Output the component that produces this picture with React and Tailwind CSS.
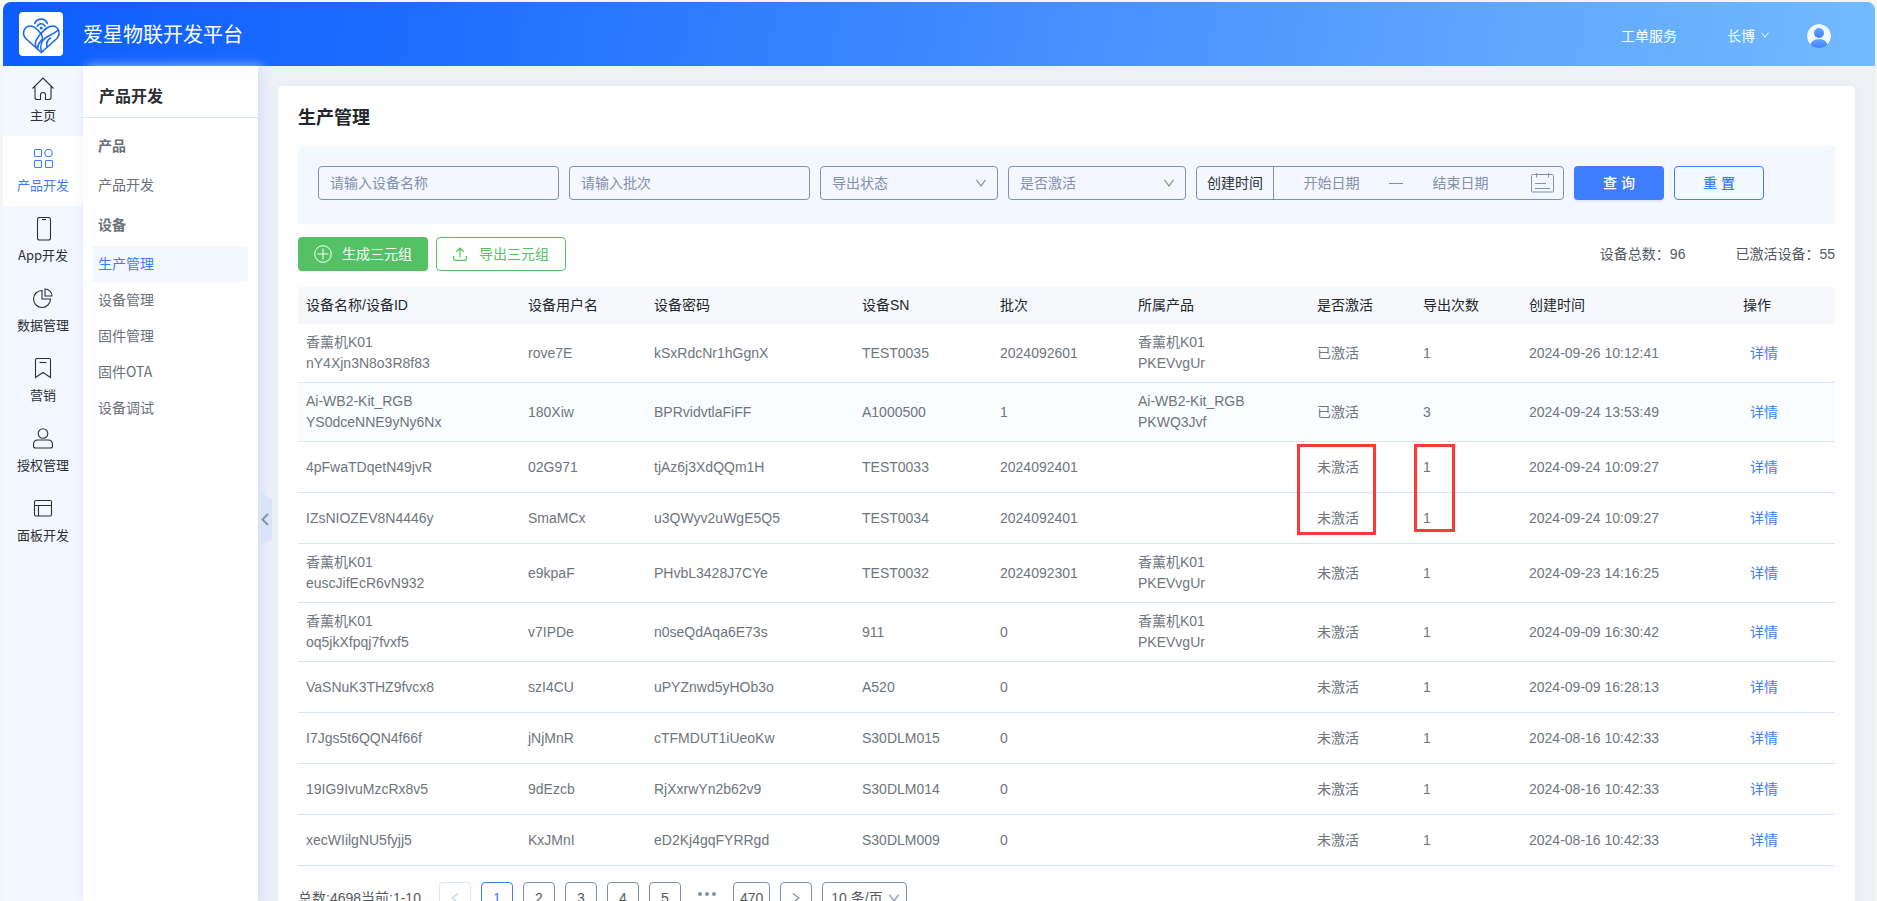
import { clsx } from "clsx";

const SIDE_NAV = [
    { label: '主页', icon: 'home' },
    { label: '产品开发', icon: 'grid', active: true },
    { label: 'App开发', icon: 'phone' },
    { label: '数据管理', icon: 'pie' },
    { label: '营销', icon: 'bookmark' },
    { label: '授权管理', icon: 'user' },
    { label: '面板开发', icon: 'panel' },
];

const MENU = [
    { title: '产品', items: ['产品开发'] },
    { title: '设备', items: ['生产管理', '设备管理', '固件管理', '固件OTA', '设备调试'] },
];

const COLUMNS = [
    { title: '设备名称/设备ID', width: 'w-[222px]' },
    { title: '设备用户名', width: 'w-[126px]' },
    { title: '设备密码', width: 'w-[208px]' },
    { title: '设备SN', width: 'w-[138px]' },
    { title: '批次', width: 'w-[138px]' },
    { title: '所属产品', width: 'w-[179px]' },
    { title: '是否激活', width: 'w-[106px]' },
    { title: '导出次数', width: 'w-[106px]' },
    { title: '创建时间', width: 'w-[214px]' },
    { title: '操作', width: 'w-[100px]' },
];

const ROWS = [
    { name: '香薰机K01', id: 'nY4Xjn3N8o3R8f83', user: 'rove7E', password: 'kSxRdcNr1hGgnX', sn: 'TEST0035', batch: '2024092601', product: '香薰机K01', productKey: 'PKEVvgUr', active: true, exports: 1, created: '2024-09-26 10:12:41' },
    { name: 'Ai-WB2-Kit_RGB', id: 'YS0dceNNE9yNy6Nx', user: '180Xiw', password: 'BPRvidvtlaFiFF', sn: 'A1000500', batch: '1', product: 'Ai-WB2-Kit_RGB', productKey: 'PKWQ3Jvf', active: true, exports: 3, created: '2024-09-24 13:53:49', hover: true },
    { id: '4pFwaTDqetN49jvR', user: '02G971', password: 'tjAz6j3XdQQm1H', sn: 'TEST0033', batch: '2024092401', exports: 1, created: '2024-09-24 10:09:27', marked: true },
    { id: 'IZsNIOZEV8N4446y', user: 'SmaMCx', password: 'u3QWyv2uWgE5Q5', sn: 'TEST0034', batch: '2024092401', exports: 1, created: '2024-09-24 10:09:27' },
    { name: '香薰机K01', id: 'euscJifEcR6vN932', user: 'e9kpaF', password: 'PHvbL3428J7CYe', sn: 'TEST0032', batch: '2024092301', product: '香薰机K01', productKey: 'PKEVvgUr', exports: 1, created: '2024-09-23 14:16:25' },
    { name: '香薰机K01', id: 'oq5jkXfpqj7fvxf5', user: 'v7IPDe', password: 'n0seQdAqa6E73s', sn: '911', batch: '0', product: '香薰机K01', productKey: 'PKEVvgUr', exports: 1, created: '2024-09-09 16:30:42' },
    { id: 'VaSNuK3THZ9fvcx8', user: 'szI4CU', password: 'uPYZnwd5yHOb3o', sn: 'A520', batch: '0', exports: 1, created: '2024-09-09 16:28:13' },
    { id: 'I7Jgs5t6QQN4f66f', user: 'jNjMnR', password: 'cTFMDUT1iUeoKw', sn: 'S30DLM015', batch: '0', exports: 1, created: '2024-08-16 10:42:33' },
    { id: '19IG9IvuMzcRx8v5', user: '9dEzcb', password: 'RjXxrwYn2b62v9', sn: 'S30DLM014', batch: '0', exports: 1, created: '2024-08-16 10:42:33' },
    { id: 'xecWIilgNU5fyjj5', user: 'KxJMnI', password: 'eD2Kj4gqFYRRgd', sn: 'S30DLM009', batch: '0', exports: 1, created: '2024-08-16 10:42:33' },
];

const ICONS = {
    home: <path d="M.5 11.500 11 1l10.500 10.500M3 9.500V20.500Q3 22.500 5 22.500H8.500V18Q8.500 15.500 11 15.500T13.500 18V22.500H17Q19 22.500 19 20.500V9.500" />,
    grid: <>
        <rect x="2.500" y="2.500" width="7" height="7" rx="1" />
        <circle cx="16.500" cy="6" r="3.700" />
        <rect x="2.500" y="13.500" width="7" height="7" rx="1" />
        <rect x="13.500" y="13.500" width="7" height="7" rx="1" />
    </>,
    phone: <>
        <rect x="5.500" y=".500" width="13" height="22.500" rx="2" />
        <path d="M10 2.500h4" />
    </>,
    pie: <>
        <path d="M10 3.500a8.500 8.500 0 1 0 8.500 8.500H10z" />
        <path d="M13 2v7h7a7 7 0 0 0-7-7z" />
    </>,
    bookmark: <>
        <path d="M3.500 20.500V3Q3.500 1.500 5 1.500H17.500Q18.500 1.500 18.500 3V20.500L11 15.500z" />
        <path d="M7.500 5.500h7" />
    </>,
    user: <>
        <circle cx="11" cy="6.500" r="4.800" />
        <path d="M3.500 21Q1.500 21 1.500 19V17.500Q1.500 13 6 13H16Q20.500 13 20.500 17.500V19Q20.500 21 18.500 21z" />
    </>,
    panel: <>
        <rect x="2.500" y="3.500" width="17" height="15.500" rx="1.500" />
        <path d="M2.500 8.500h17M6.500 8.500v10.500" />
    </>,
};

const NavIcon = ({ name }) => (
    <svg className="w-[22px] h-6" viewBox="0 0 22 24" fill="none" stroke="currentColor" strokeWidth="1.100">
        {ICONS[name]}
    </svg>
);

const Chevron = ({ className }) => (
    <svg className={className} viewBox="0 0 10 8" fill="none" stroke="currentColor" strokeWidth="1.200">
        <path d="M.5.8 5 7 9.500.8" />
    </svg>
);

const Logo = () => (
    <svg className="size-11 rounded bg-white" viewBox="0 0 44 44" fill="none" stroke="#1b68f5" strokeWidth="1.600" strokeLinecap="round">
        <path d="M22.300 40.500 6.800 26.500C2 21 5.500 14 11.500 14c4.500 0 7.500 4 10.200 7.500 3 3.500 2 5.500-.3 8-2 2.200-3 4-2.800 7.500" />
        <path d="M22.300 40.500 37.800 26.500C42.500 21 39 14 33.500 14c-5 0-8.500 4-12 8-4.300 5-6.500 8.500-4.500 13.500" />
        <path d="M22.700 40C20.500 34 22.500 28.500 27 25.500c4-2.500 8.500-3.500 12-7.500" />
        <path d="M28 35c-1-4 .5-7 3.500-9" />
        <path d="M15.800 11.500a6.700 6.700 0 0 1 12.600 0M18.300 14.200a4.200 4.200 0 0 1 7.700 0" />
        <circle cx="22.200" cy="16" r=".700" fill="#1b68f5" />
    </svg>
);

const Header = () => (
    <header className="flex items-center h-16 shrink-0 pl-4 pr-11 rounded-t-lg text-white bg-[linear-gradient(100deg,#0d5dff_0%,#1c6bff_20%,#60a6ff_80%,#72baff_100%)]">
        <Logo />
        <h1 className="ml-5 text-xl leading-none">爱星物联开发平台</h1>
        <a href="#" className="ml-auto mt-0.5 text-sm">工单服务</a>
        <button type="button" className="flex items-center ml-[50px] mt-0.5 text-sm gap-1.5">
            长博
            <Chevron className="w-2 h-1.5" />
        </button>
        <svg className="ml-[38px] mt-1 size-6" viewBox="0 0 24 24">
            <defs>
                <linearGradient id="avatar" x1="0" y1="0" x2="0" y2="1">
                    <stop offset="0" stopColor="#64a8ff" />
                    <stop offset="1" stopColor="#3c7dff" />
                </linearGradient>
                <clipPath id="round"><circle cx="12" cy="12" r="12" /></clipPath>
            </defs>
            <g clipPath="url(#round)">
                <circle cx="12" cy="12" r="12" fill="#f3f8ff" />
                <circle cx="12" cy="9" r="5" fill="url(#avatar)" />
                <path d="M3 24c0-6 3.500-9 9-9s9 3 9 9z" fill="url(#avatar)" />
            </g>
        </svg>
    </header>
);

const SideNav = () => (
    <nav className="w-20 shrink-0 bg-[#f3f7ff]">
        {SIDE_NAV.map((item) => (
            <a
                key={item.label}
                href="#"
                className={clsx(
                    "flex flex-col items-center h-[70px] pt-[11px] gap-1 text-[13px] leading-5",
                    item.active ? "bg-white text-[#3d7eff]" : "text-[#2b2f36]"
                )}>
                <NavIcon name={item.icon} />
                {item.label}
            </a>
        ))}
    </nav>
);

const SubMenu = () => (
    <aside className="relative z-10 w-[175px] shrink-0 bg-white shadow-[4px_2px_12px_#d0dff7]">
        <h2 className="h-[52px] pl-4 pt-2 text-base leading-[42px] font-bold text-[#2b2f36] border-b border-[#d9e5f6]">产品开发</h2>
        <div className="pt-2.5 px-2.5 text-sm text-[#6b7078]">
            {MENU.map((group) => (
                <div key={group.title} className="mb-1">
                    <h3 className="h-9 mb-[3px] px-[5px] leading-[34px] font-bold">{group.title}</h3>
                    {group.items.map((item) => (
                        <a
                            key={item}
                            href="#"
                            className={clsx("block h-9 px-[5px] leading-[34px]", item === '生产管理' && "bg-[#f3f7ff] text-[#3d7eff]")}>
                            {item}
                        </a>
                    ))}
                </div>
            ))}
        </div>
        <button type="button" aria-label="收起" className="absolute left-full top-[425px] w-3.5 h-14 text-[#8594ab]">
            <svg viewBox="0 0 14 56" className="w-full h-full">
                <path d="M0 0 14 8V49L0 56z" fill="#d9e5f6" />
                <path d="M10 23 4.500 28.500 10 34" fill="none" stroke="currentColor" strokeWidth="2" />
            </svg>
        </button>
    </aside>
);

const field = "h-[34px] border border-[#8190ab] rounded text-sm text-[#8190ab] placeholder:text-[#8190ab] bg-transparent outline-none";

const SelectField = ({ label }) => (
    <div className="relative w-[178px]">
        <select aria-label={label} className={clsx(field, "w-full px-[11px] appearance-none")}>
            <option>{label}</option>
        </select>
        <Chevron className="absolute right-3 top-[13px] w-2.5 h-2 text-[#8190ab] pointer-events-none" />
    </div>
);

const Filters = () => (
    <form className="flex flex-wrap items-start gap-2.5 min-h-[78px] p-5 bg-[#f3f7ff]">
        <input aria-label="设备名称" placeholder="请输入设备名称" className={clsx(field, "w-[241px] px-[11px]")} />
        <input aria-label="批次" placeholder="请输入批次" className={clsx(field, "w-[241px] px-[11px]")} />
        <SelectField label="导出状态" />
        <SelectField label="是否激活" />
        <div className={clsx(field, "flex items-center w-[368px]")}>
            <label htmlFor="start" className="h-full px-2.5 leading-8 text-[#2b2f36] border-r border-[#8190ab]">创建时间</label>
            <input id="start" placeholder="开始日期" className="w-[115px] text-center placeholder:text-[#8190ab] outline-none" />
            <span className="w-3.5 h-px bg-[#8190ab]" />
            <input aria-label="结束日期" placeholder="结束日期" className="w-[115px] text-center placeholder:text-[#8190ab] outline-none" />
            <svg className="ml-auto mr-2 w-6 h-5" viewBox="0 0 24 20" fill="none" stroke="currentColor">
                <rect x=".500" y="1.500" width="22" height="17.500" rx="1" />
                <path d="M5.500 0v4.500M17.500 0v4.500M4 10.500h11M4 15.500h15" />
            </svg>
        </div>
        <button type="button" className="w-[90px] h-[34px] rounded text-sm font-medium text-white bg-[#3d7eff] shadow-[0_2px_0_rgba(0,0,0,0.06)]">查 询</button>
        <button type="button" className="w-[90px] h-[34px] rounded text-sm font-medium text-[#3d7eff] border border-[#3d7eff]">重 置</button>
    </form>
);

const Toolbar = () => (
    <div className="flex items-center mt-[13px] text-sm">
        <button type="button" className="flex items-center justify-center gap-2.5 w-[130px] h-[34px] rounded text-white bg-[#54c264]">
            <svg className="size-[18px]" viewBox="0 0 18 18" fill="none" stroke="currentColor">
                <circle cx="9" cy="9" r="8.300" />
                <path d="M9 3.500v11M3.500 9h11" />
            </svg>
            生成三元组
        </button>
        <button type="button" className="flex items-center justify-center gap-3 ml-2 w-[130px] h-[34px] rounded text-[#54c264] border border-[#54c264]">
            <svg className="size-3.5" viewBox="0 0 14 14" fill="none" stroke="currentColor" strokeWidth="1.200">
                <path d="M.7 9v3.300q0 1 1 1h10.600q1 0 1-1V9M7 10.500V1.300M3.300 4.800 7 1.200l3.700 3.600" />
            </svg>
            导出三元组
        </button>
        <span className="ml-auto text-[#555a61]">设备总数：96</span>
        <span className="ml-[50px] text-[#555a61]">已激活设备：55</span>
    </div>
);

const cell = "px-2 border-b border-[#d9e5f6]";

const DeviceTable = () => (
    <table className="mt-4 w-full table-fixed border-separate border-spacing-0 text-left text-sm text-[#6f757d]">
        <thead>
            <tr className="h-[37px] text-[#22262c]">
                {COLUMNS.map((column) => (
                    <th key={column.title} className={clsx(column.width, "px-2 pb-0.5 font-normal bg-[#f6f8fc] first:rounded-tl last:rounded-tr")}>{column.title}</th>
                ))}
            </tr>
        </thead>
        <tbody>
            {ROWS.map((row) => (
                <tr key={row.id} className={clsx(row.name ? "h-[59px]" : "h-[51px]", row.hover && "bg-[#f9fdff]")}>
                    <td className={clsx(cell, "leading-[21px]")}>
                        {row.name && <div>{row.name}</div>}
                        <div>{row.id}</div>
                    </td>
                    <td className={cell}>{row.user}</td>
                    <td className={cell}>{row.password}</td>
                    <td className={cell}>{row.sn}</td>
                    <td className={cell}>{row.batch}</td>
                    <td className={clsx(cell, "leading-[21px]")}>
                        <div>{row.product}</div>
                        <div>{row.productKey}</div>
                    </td>
                    <td className={clsx(cell, "relative")}>
                        {row.active ? '已激活' : '未激活'}
                        {row.marked && <span className="absolute -left-3 top-0.5 w-[79px] h-[91px] border-3 border-[#f93a37]" />}
                    </td>
                    <td className={clsx(cell, "relative")}>
                        {row.exports}
                        {row.marked && <span className="absolute -left-px top-0.5 w-[41px] h-[88px] border-3 border-[#f93a37]" />}
                    </td>
                    <td className={cell}>{row.created}</td>
                    <td className="px-[15px] border-b border-[#d9e5f6]"><a href="#" className="text-[#3d7eff]">详情</a></td>
                </tr>
            ))}
        </tbody>
    </table>
);

const pageButton = "flex items-center justify-center h-8 min-w-8 px-1.5 border rounded";

const Pagination = () => (
    <div className="flex items-center gap-2.5 mt-4 text-sm text-[#555a61]">
        <span className="mr-2">总数:4698当前:1-10</span>
        <button type="button" aria-label="上一页" disabled className={clsx(pageButton, "border-[#d9e5f6] text-[#c3d3ea]")}>
            <Chevron className="w-2.5 h-2 rotate-90" />
        </button>
        {[1, 2, 3, 4, 5].map((page) => (
            <button key={page} type="button" className={clsx(pageButton, page === 1 ? "border-[#3d7eff] text-[#3d7eff]" : "border-[#8190ab]")}>{page}</button>
        ))}
        <span className="flex justify-center gap-[3px] w-8 pb-2">
            {[0, 1, 2].map((dot) => <i key={dot} className="size-1 rounded-full bg-[#8190ab]" />)}
        </span>
        <button type="button" className={clsx(pageButton, "border-[#8190ab]")}>470</button>
        <button type="button" aria-label="下一页" className={clsx(pageButton, "border-[#8190ab] text-[#8190ab]")}>
            <Chevron className="w-2.5 h-2 -rotate-90" />
        </button>
        <div className="relative">
            <select aria-label="每页条数" className="h-8 w-[85px] pl-2 border border-[#8190ab] rounded appearance-none">
                <option>10 条/页</option>
            </select>
            <Chevron className="absolute right-2 top-3 w-2.5 h-2 text-[#8190ab] pointer-events-none" />
        </div>
    </div>
);

export default function App() {
    return (
        <div className="h-screen overflow-hidden pt-0.5 pl-[3px] pr-0.5 bg-[#f4f5f5] font-['Liberation_Sans','Noto_Sans_CJK_SC',sans-serif]">
            <div className="flex flex-col h-full">
                <div className="font-['Noto_Sans_CJK_SC',sans-serif]">
                    <Header />
                </div>
                <div className="flex flex-1 min-h-0 bg-[#eff1f5]">
                    <div className="flex shrink-0 font-['Noto_Sans_CJK_SC',sans-serif]">
                        <SideNav />
                        <SubMenu />
                    </div>
                    <main className="flex-1 min-w-0 p-5">
                        <section className="p-5 min-h-full bg-white rounded shadow-[0_0_10px_#e2e9f8]">
                            <h2 className="mb-4 text-lg leading-6 font-bold text-[#22262c]">生产管理</h2>
                            <Filters />
                            <Toolbar />
                            <DeviceTable />
                            <Pagination />
                        </section>
                    </main>
                </div>
            </div>
        </div>
    );
}
